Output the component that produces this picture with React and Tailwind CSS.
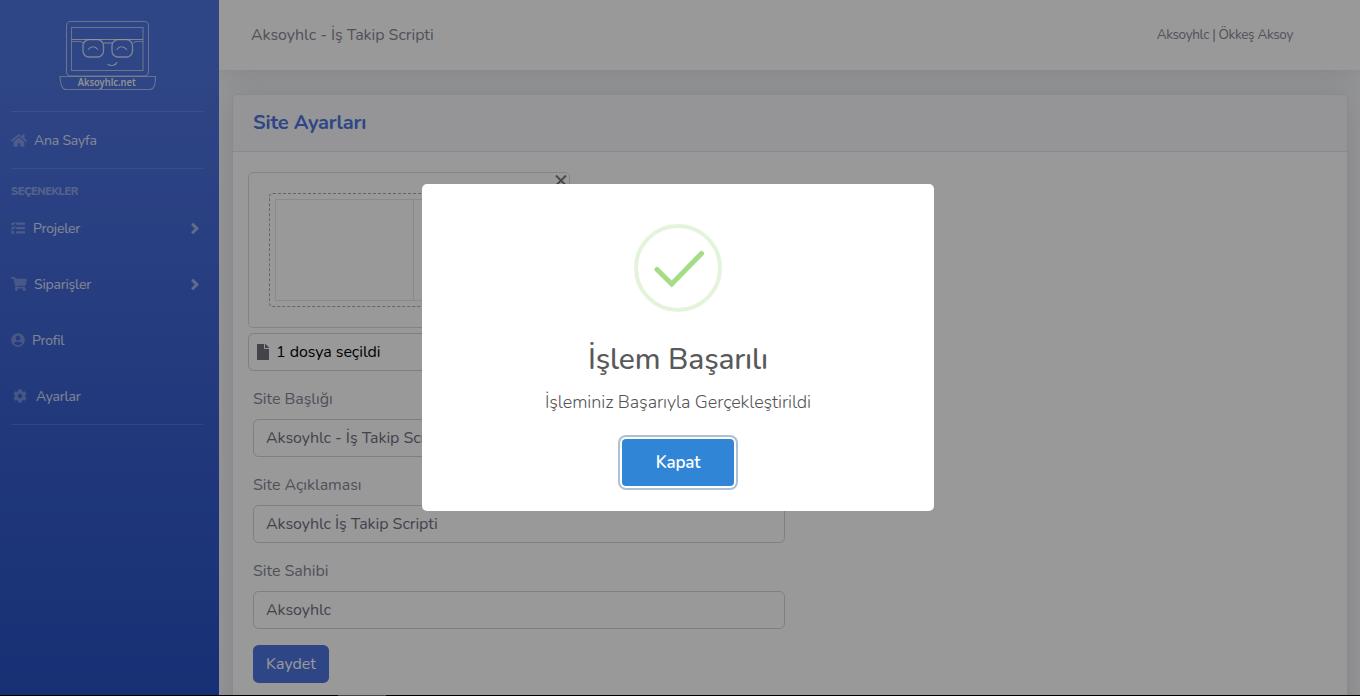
import React from "react";
import { FaHome, FaTasks, FaShoppingCart, FaUserCircle, FaCog, FaFile, FaAngleRight } from "react-icons/fa";

function Logo() {
  return (
    <svg width="98" height="72" viewBox="0 0 98 72" fill="none" stroke="#ffffff" strokeOpacity="0.55" strokeWidth="1.1">
      <rect x="7.500" y="2.500" width="82" height="54.500" rx="4" />
      <rect x="12.500" y="8.500" width="71.500" height="43" />
      <path d="M12.500 20.500H84" strokeOpacity="0.75" />
      <path d="M12.500 22.500H22L24 24M84 22.500H77L74 24" />
      <path d="M1 57.500H96.500C96.500 64 95 70.500 91 70.500H7C3 70.500 1 64 1 57.500Z" />
      <rect x="24" y="20.700" width="20.500" height="17.300" rx="6" strokeWidth="1.300" strokeOpacity="0.75" />
      <rect x="53" y="20.700" width="20.500" height="17.300" rx="6" strokeWidth="1.300" strokeOpacity="0.75" />
      <path d="M44.500 24H53" strokeOpacity="0.75" />
      <path d="M29 30.800C32 26.700 36 26.700 39 30.800M57.500 30.800C60.500 26.700 64.500 26.700 68 30.800M48.500 45.300C52 47.500 57 46.500 58 43" strokeOpacity="0.75" />
      <text x="47.700" y="67" textAnchor="middle" textLength="58" lengthAdjust="spacingAndGlyphs" fontFamily="Noto Sans, sans-serif" fontSize="10.500" fontWeight="600" fill="#ffffff" fillOpacity="0.9" stroke="none">Aksoyhlc.net</text>
    </svg>
  );
}

function NavItem({ icon, label, arrow }) {
  return (
    <div className="flex h-14 items-center text-[14px] text-white/80">
      <span className="flex text-white/30">{icon}</span>
      <span className="pt-px tracking-[-0.200px]">{label}</span>
      {arrow && (
        <FaAngleRight className="mr-[1px] ml-auto h-[17px] w-[14px] text-white/50" stroke="currentColor" strokeWidth="12" />
      )}
    </div>
  );
}

function Divider() {
  return <div className="h-px shrink-0 bg-white/15" />;
}

function Field({ label, value }) {
  return (
    <div className="mb-4 w-[532px] tracking-[-0.050px]">
      <div className="mb-2 h-6 leading-6">{label}</div>
      <div className="flex h-[38px] items-center rounded-[5.600px] border border-[#d1d3e2] px-3 text-[#6e707e]">
        {value}
      </div>
    </div>
  );
}

function Dialog() {
  return (
    <div className="flex h-[327px] w-[512px] flex-col items-center rounded-[5px] bg-white pt-10">
      <svg width="88" height="88" viewBox="0 0 88 88" fill="none">
        <circle cx="44" cy="44" r="42" stroke="#a5dc86" strokeOpacity="0.3" strokeWidth="4" />
        <path d="M23 45.500L37.700 60L67.500 29.500" stroke="#a5dc86" strokeWidth="5" strokeLinecap="round" />
      </svg>
      <h2 className="mt-[26px] text-[30px] leading-[44px] font-medium tracking-[-0.150px] text-[#595959]">
        İşlem Başarılı
      </h2>
      <p className="mt-[7px] text-[18px] leading-[26px] font-light tracking-[-0.080px] text-[#545454]">
        İşleminiz Başarıyla Gerçekleştirildi
      </p>
      <button className="mt-[24px] h-[47px] w-28 rounded-[4px] bg-[#3085d6] text-[17px] font-semibold tracking-[-0.150px] text-white shadow-[0_0_0_2px_#fff,0_0_0_4px_rgba(50,100,150,0.4)]">
        Kapat
      </button>
    </div>
  );
}

export default function App() {
  return (
    <div className="relative flex h-[696px] w-[1360px] overflow-hidden bg-[#f8f9fc] font-[Nunito,Lato,sans-serif] text-base text-[#858796]">
      <aside className="flex h-[780px] w-[219px] shrink-0 flex-col bg-linear-to-b from-[#4e73df] from-10% to-[#224abe] pr-4 pl-[11px]">
        <div className="flex h-[111px] shrink-0 items-start pt-[19px] pl-[47.500px]">
          <Logo />
        </div>
        <Divider />
        <NavItem icon={<FaHome className="mr-[7px] h-[15px] w-4" />} label="Ana Sayfa" />
        <Divider />
        <div className="mt-[15px] h-4 text-[11px] leading-4 font-extrabold tracking-[-0.400px] text-white/40">SEÇENEKLER</div>
        <NavItem icon={<FaTasks className="mr-2 size-[14px]" stroke="currentColor" strokeWidth="14" />} label="Projeler" arrow />
        <NavItem icon={<FaShoppingCart className="mr-[7px] h-[14px] w-4" />} label="Siparişler" arrow />
        <NavItem icon={<FaUserCircle className="mr-[7px] size-[14px]" />} label="Profil" />
        <NavItem icon={<FaCog className="mr-[9px] ml-[2px] size-[14px]" />} label="Ayarlar" />
        <Divider />
      </aside>

      <main className="flex min-w-0 flex-1 flex-col overflow-hidden">
        <header className="flex h-[70px] shrink-0 items-center justify-between bg-white pr-[67px] pl-8 shadow-[0_2.400px_28px_0_rgba(58,59,69,0.15)]">
          <span className="tracking-[-0.040px]">Aksoyhlc - İş Takip Scripti</span>
          <span className="pt-px text-[13.500px] tracking-[-0.340px]">Aksoyhlc | Ökkeş Aksoy</span>
        </header>

        <section className="mt-6 mr-3 ml-[13px] h-[800px] shrink-0 rounded-[5.600px] border border-[#e3e6f0] bg-white shadow-[0_2.400px_28px_0_rgba(58,59,69,0.15)]">
          <div className="flex h-[57px] items-center rounded-t-[5px] border-b border-[#e3e6f0] bg-[#f8f9fc] px-5">
            <h1 className="text-[20px] font-bold tracking-[-0.160px] text-[#4e73df]">Site Ayarları</h1>
          </div>
          <div className="px-5 pt-5">
            <div className="-ml-[5px] w-[322px]">
              <div className="relative h-[156px] rounded-[5px] border border-[#ddd] p-5">
                <div className="flex h-[114px] rounded-[4px] border border-dashed border-[#aaa] p-[5px]">
                  <div className="flex h-[102px] w-[139px] items-end justify-center border border-[#e3e6f0] pb-2 text-[13px] text-black/[0.03]">
                    Aksoyhlc.net
                  </div>
                  <div className="flex-1 border-y border-r border-[#e3e6f0]" />
                </div>
                <svg className="absolute top-[2px] right-[2px]" width="12" height="11" viewBox="0 0 12 11" stroke="#777" strokeWidth="1.900">
                  <path d="M1 .5L11 10.500M11 .5L1 10.500" />
                </svg>
              </div>
              <div className="mt-[5px] flex h-[38px] items-center rounded-[5.600px] border border-[#d1d3e2] pl-[8px] text-black">
                <FaFile className="mr-[7px] h-4 w-3 text-[#6e707e]" />
                <span className="tracking-[-0.050px]">1 dosya seçildi</span>
              </div>
            </div>
            <div className="mt-4">
              <Field label="Site Başlığı" value="Aksoyhlc - İş Takip Scripti" />
              <Field label="Site Açıklaması" value="Aksoyhlc İş Takip Scripti" />
              <Field label="Site Sahibi" value="Aksoyhlc" />
            </div>
            <button className="h-[38px] w-[76px] rounded-[5.600px] bg-[#4e73df] text-white">Kaydet</button>
          </div>
        </section>
      </main>

      <div className="absolute inset-0 flex flex-col items-center bg-black/40 pt-[184px] pr-1">
        <Dialog />
      </div>
      <div className="absolute inset-x-0 bottom-0 flex h-px bg-black pl-[338px]">
        <div className="w-12 bg-[#444]" />
      </div>
    </div>
  );
}
